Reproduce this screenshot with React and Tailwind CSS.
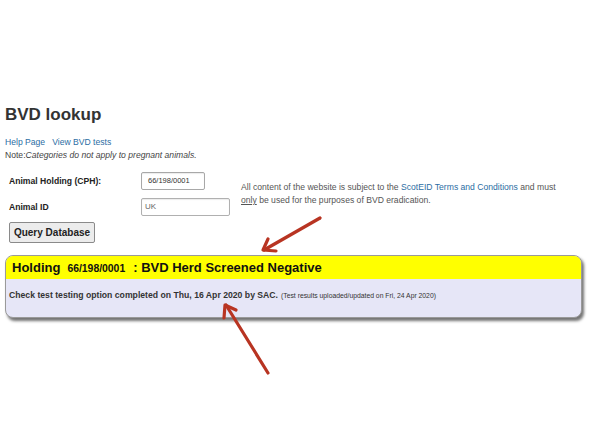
export default function App() {
  const font = { fontFamily: '"Liberation Sans", Arial, sans-serif' };
  return (
    <div className="relative w-[592px] h-[444px] bg-white overflow-hidden text-[#333]" style={font}>
      <div className="pl-[5px] pt-[105px]">
        <h1 className="text-[17px] leading-[20px] font-bold text-[#333]">BVD lookup</h1>
        <div className="mt-[11px] text-[8.6px] leading-[13px] text-[#2b6da3] flex gap-[7px]">
          <span>Help Page</span>
          <span>View BVD tests</span>
        </div>
        <div className="text-[8.6px] leading-[13px] text-[#444]">
          Note:<span className="italic">Categories do not apply to pregnant animals.</span>
        </div>
        <div className="flex mt-[10px]">
          <div className="flex flex-col pl-[4px] w-[236px]">
            <div className="flex items-center h-[18px]">
              <span className="w-[132px] text-[8.6px] font-bold text-[#222]">Animal Holding (CPH):</span>
              <div className="w-[64px] h-[18px] border border-[#a8a8a8] rounded-[2px] bg-white flex items-center pl-[6px] text-[7.5px] text-[#333] shadow-[inset_0_1px_1px_rgba(0,0,0,0.08)]">66/198/0001</div>
            </div>
            <div className="flex items-center h-[18px] mt-[8px]">
              <span className="w-[132px] text-[8.6px] font-bold text-[#222]">Animal ID</span>
              <div className="w-[89px] h-[18px] border border-[#b0b0b0] rounded-[2px] bg-white flex items-center pl-[3px] text-[8px] text-[#666] shadow-[inset_0_1px_1px_rgba(0,0,0,0.08)]">UK</div>
            </div>
            <div className="flex mt-[6px]">
              <div className="flex items-center justify-center w-[86px] h-[21px] border border-[#8a8a8a] rounded-[2px] bg-[#ececec] text-[10px] font-bold text-[#222]">Query Database</div>
            </div>
          </div>
          <div className="pt-[9px] text-[8.6px] leading-[13px] text-[#555] w-[322px]">
            All content of the website is subject to the <span className="text-[#2b6da3]">ScotEID Terms and Conditions</span> and must <span className="underline">only</span> be used for the purposes of BVD eradication.
          </div>
        </div>
        <div className="mt-[12px] w-[577px] rounded-[8px] border border-[#9a9a9a] bg-[#e6e6f7] overflow-hidden shadow-[2px_3px_3px_rgba(0,0,0,0.55)]">
          <div className="bg-[#ffff00] h-[23px] flex items-end pb-[4px] pl-[6px] font-bold text-[#111]">
            <span className="text-[13px] leading-[15px]">Holding</span>
            <span className="text-[10.4px] leading-[13px] ml-[7px]">66/198/0001</span>
            <span className="text-[13px] leading-[15px] ml-[8px]">: BVD Herd Screened Negative</span>
          </div>
          <div className="h-[38px] pl-[3px] pt-[2px] text-[#333] whitespace-nowrap">
            <span className="text-[8.66px] font-bold">Check test testing option completed on Thu, 16 Apr 2020 by SAC.</span>
            <span className="text-[6.8px] ml-[3px]">(Test results uploaded/updated on Fri, 24 Apr 2020)</span>
          </div>
        </div>
      </div>
      <svg className="absolute left-0 top-0 pointer-events-none" width="592" height="444" viewBox="0 0 592 444">
        <g stroke="#b83422" strokeWidth="3.2" strokeLinecap="round" strokeLinejoin="round" fill="none">
          <line x1="320" y1="218" x2="264" y2="250" />
          <polyline points="268,239 263,250 276,251" />
          <line x1="268" y1="373" x2="226" y2="305" />
          <polyline points="224,318 225,305 236,310" />
        </g>
      </svg>
    </div>
  );
}
